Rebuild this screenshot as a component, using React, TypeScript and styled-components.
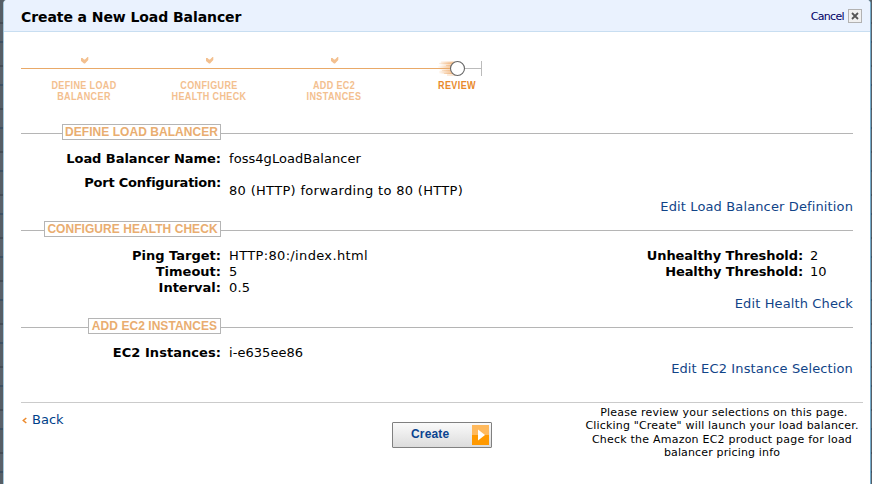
import React from "react";
import styled, { createGlobalStyle } from "styled-components";

const GlobalStyle = createGlobalStyle`
  * { box-sizing: border-box; }
  html, body { margin: 0; padding: 0; overflow: hidden; }
  body { background: #545b63; }
`;

const Page = styled.div`
  width: 872px;
  height: 484px;
  padding: 0 1px 0 3px;
  background: repeating-linear-gradient(180deg, #565e66 0 22px, #454c55 22px 24px, #59616a 24px 41px, #3e5062 41px 43px);
  font-family: Verdana, "DejaVu Sans", sans-serif;
  font-size: 13px;
  line-height: 16px;
  color: #000;
`;

const Dialog = styled.main`
  height: 100%;
  background: #fff;
  border-left: 1px solid #a5c9de;
  border-right: 1px solid #74abcb;
  border-radius: 4px 4px 0 0;
  overflow: hidden;
`;

const Header = styled.header`
  height: 32px;
  padding: 2px 8px 0 17px;
  display: flex;
  align-items: center;
  justify-content: space-between;
  background: #eaf2fe;
  border-bottom: 1px solid #c8def1;
`;

const Title = styled.h1<{ $track: number }>`
  margin: 0;
  padding-top: 1px;
  font-size: 14px;
  line-height: 18px;
  letter-spacing: ${(p) => p.$track}px;
`;

const Cancel = styled.a`
  display: flex;
  align-items: center;
  gap: 4px;
  font-size: 11px;
  letter-spacing: -0.65px;
  color: #000066;
`;

const CloseIcon = styled.svg`
  margin-bottom: 1px;
`;

const Content = styled.div`
  padding: 0 17px;
`;

const Progress = styled.div`
  height: 92px;
  padding-top: 24px;
`;

const Track = styled.svg`
  display: block;
`;

const Steps = styled.div`
  display: grid;
  grid-template-columns: 126px 124px 126px 120px;
`;

const Step = styled.div<{ $active?: boolean }>`
  font-family: "Liberation Sans", Arial, sans-serif;
  font-weight: bold;
  font-size: 11px;
  line-height: 11px;
  letter-spacing: 0.45px;
  text-align: center;
  white-space: pre;
  transform: scaleX(0.82);
  color: ${(p) => (p.$active ? "#e88a2c" : "#f3c08f")};
`;

const Section = styled.section<{ $height: number }>`
  height: ${(p) => p.$height}px;
`;

const Legend = styled.div`
  display: flex;
  align-items: center;
  height: 16px;
  margin-bottom: 11px;
`;

const Line = styled.span<{ $width?: number }>`
  height: 1px;
  margin-top: 2px;
  background: #b5b5b5;
  flex: ${(p) => (p.$width ? `0 0 ${p.$width}px` : "1")};
`;

const LegendText = styled.h2<{ $width: number }>`
  margin: 0;
  flex: none;
  width: ${(p) => p.$width}px;
  height: 16px;
  border: 1px solid #b5b5b5;
  font: bold 12px/14px "Liberation Sans", Arial, sans-serif;
  letter-spacing: 0.05px;
  text-align: center;
  white-space: nowrap;
  color: #e9ad70;
`;

const Columns = styled.div`
  display: flex;
  justify-content: space-between;
  align-items: flex-start;
`;

const Fields = styled.dl<{ $label: number; $width: number; $gap?: number }>`
  margin: 0;
  width: ${(p) => p.$width}px;
  display: grid;
  grid-template-columns: ${(p) => p.$label}px 1fr;
  column-gap: ${(p) => p.$gap ?? 8}px;
`;

const Label = styled.dt<{ $track?: number; $top?: number }>`
  margin-top: ${(p) => p.$top ?? 0}px;
  font-weight: bold;
  text-align: right;
  white-space: nowrap;
  letter-spacing: ${(p) => p.$track ?? 0}px;
`;

const Value = styled.dd<{ $track?: number; $top?: number }>`
  margin: ${(p) => p.$top ?? 0}px 0 0;
  white-space: nowrap;
  letter-spacing: ${(p) => p.$track ?? 0}px;
`;

const EditLink = styled.a`
  display: block;
  text-align: right;
  color: #114488;
  letter-spacing: 0.13px;
`;

const Footer = styled.footer`
  margin: 0 7px 0 17px;
  padding-top: 3px;
  border-top: 1px solid #cbcbcb;
  display: grid;
  grid-template-columns: 371px 100px 1fr;
`;

const Back = styled.a`
  height: 16px;
  margin-top: 6px;
  padding-left: 1px;
  display: flex;
  align-items: center;
  gap: 5px;
  color: #003f8a;
`;

const CreateButton = styled.button`
  margin-top: 16px;
  width: 100px;
  height: 26px;
  padding: 0 2px 0 18px;
  display: flex;
  align-items: center;
  justify-content: space-between;
  border: 1px solid #808080;
  border-radius: 1px;
  background: linear-gradient(#fafafa, #dcdcdc);
  font: bold 12px/14px "Liberation Sans", Arial, sans-serif;
  letter-spacing: 0.15px;
  color: #0b4390;
`;

const ButtonLabel = styled.span`
  padding-bottom: 2px;
`;

const Note = styled.p`
  margin: 0 3px 0 0;
  justify-self: end;
  width: 276px;
  font-size: 11px;
  line-height: 13.3px;
  text-align: center;
  white-space: nowrap;
`;

const NoteLine = styled.span<{ $track: number; $indent?: number }>`
  display: block;
  padding-left: ${(p) => p.$indent ?? 0}px;
  letter-spacing: ${(p) => p.$track}px;
`;

const Check = ({ x }: { x: number }) => (
  <path d={`M${x} 2h1.500l1.500 1.500h1l2.500-2.500h.8v3L${x + 4} 7.500h-1L${x} 5z`} fill="#f3c08f" />
);

export default function App() {
  return (
    <Page>
      <GlobalStyle />
      <Dialog>
        <Header>
          <Title $track={-0.08}>Create a New Load Balancer</Title>
          <Cancel>
            Cancel
            <CloseIcon width="14" height="14" viewBox="0 0 14 14">
              <rect x=".5" y=".5" width="13" height="13" fill="#f0f0f0" stroke="#b2b2b2" />
              <path d="M4 4l6 6M10 4l-6 6" stroke="#555" strokeWidth="1.8" />
            </CloseIcon>
          </Cancel>
        </Header>
        <Content>
          <Progress>
            <Track width="465" height="24" viewBox="0 0 465 24">
              <Check x={60} />
              <Check x={185} />
              <Check x={310} />
              <path d="M0 12.5h420" stroke="#e9a968" />
              <defs>
                <linearGradient id="trail">
                  <stop offset="0" stopColor="#f0a55c" stopOpacity=".1" />
                  <stop offset="1" stopColor="#eda868" stopOpacity=".7" />
                </linearGradient>
                <linearGradient id="glow">
                  <stop offset="0" stopColor="#f0a55c" stopOpacity="0" />
                  <stop offset="1" stopColor="#eda868" stopOpacity=".65" />
                </linearGradient>
              </defs>
              <path
                d="M420 5.5h13v1h-13zM418 7h14v1h-14zM425 9h8v1h-8zM417 10.5h14v1h-14zM421 14h9v1h-9zM418 15.5h14v1h-14zM423 17h10v1h-10zM426 18.5h9v1h-9z"
                fill="url(#trail)"
              />
              <path d="M418 6h16v12h-16z" fill="url(#glow)" />
              <path d="M420 12.5h10" stroke="#e9a968" />
              <path d="M443 12.5h17M460.500 5v15" stroke="#bbb" fill="none" />
              <circle cx="436.500" cy="12.500" r="7" fill="#fff" stroke="#666" strokeWidth="1.1" />
            </Track>
            <Steps>
              <Step>{"DEFINE LOAD\nBALANCER"}</Step>
              <Step>{"CONFIGURE\nHEALTH CHECK"}</Step>
              <Step>{"ADD EC2\nINSTANCES"}</Step>
              <Step $active>REVIEW</Step>
            </Steps>
          </Progress>

          <Section $height={97}>
            <Legend>
              <Line $width={41} />
              <LegendText $width={159}>DEFINE LOAD BALANCER</LegendText>
              <Line />
            </Legend>
            <Fields $label={200} $width={600}>
              <Label $track={-0.05}>Load Balancer Name:</Label>
              <Value $track={0.05}>foss4gLoadBalancer</Value>
              <Label $top={8} $track={-0.24}>Port Configuration:</Label>
              <Value $top={16} $track={0.32}>80 (HTTP) forwarding to 80 (HTTP)</Value>
            </Fields>
            <EditLink>Edit Load Balancer Definition</EditLink>
          </Section>

          <Section $height={97}>
            <Legend>
              <Line $width={23} />
              <LegendText $width={177}>CONFIGURE HEALTH CHECK</LegendText>
              <Line />
            </Legend>
            <Columns>
              <Fields $label={200} $width={500}>
                <Label>Ping Target:</Label>
                <Value $track={0.35}>HTTP:80:/index.html</Value>
                <Label>Timeout:</Label>
                <Value>5</Value>
                <Label>Interval:</Label>
                <Value $track={0.15}>0.5</Value>
              </Fields>
              <Fields $label={183} $width={233} $gap={7}>
                <Label $track={-0.08}>Unhealthy Threshold:</Label>
                <Value>2</Value>
                <Label $track={-0.1}>Healthy Threshold:</Label>
                <Value>10</Value>
              </Fields>
            </Columns>
            <EditLink>Edit Health Check</EditLink>
          </Section>

          <Section $height={84}>
            <Legend>
              <Line $width={67} />
              <LegendText $width={133}>ADD EC2 INSTANCES</LegendText>
              <Line />
            </Legend>
            <Fields $label={200} $width={600}>
              <Label $track={0.05}>EC2 Instances:</Label>
              <Value $track={0.05}>i-e635ee86</Value>
            </Fields>
            <EditLink>Edit EC2 Instance Selection</EditLink>
          </Section>
        </Content>
        <Footer>
          <Back>
            <svg width="5" height="7" viewBox="0 0 5 7">
              <path d="M4.300 1L1.300 3.500L4.300 6" fill="none" stroke="#ec8a2c" strokeWidth="1.500" />
            </svg>
            Back
          </Back>
          <CreateButton>
            <ButtonLabel>Create</ButtonLabel>
            <svg width="17" height="20" viewBox="0 0 17 20">
              <path d="M0 0h17v10H0z" fill="#ffb95c" />
              <path d="M0 10h17v10H0z" fill="#ff9900" />
              <path d="M6 4.500v11l7-5.500z" fill="#fff" />
            </svg>
          </CreateButton>
          <Note>
            <NoteLine $track={0.23} $indent={4}>Please review your selections on this page.</NoteLine>
            <NoteLine $track={0.18}>Clicking "Create" will launch your load balancer.</NoteLine>
            <NoteLine $track={0.22}>Check the Amazon EC2 product page for load</NoteLine>
            <NoteLine $track={0.15}>balancer pricing info</NoteLine>
          </Note>
        </Footer>
      </Dialog>
    </Page>
  );
}
